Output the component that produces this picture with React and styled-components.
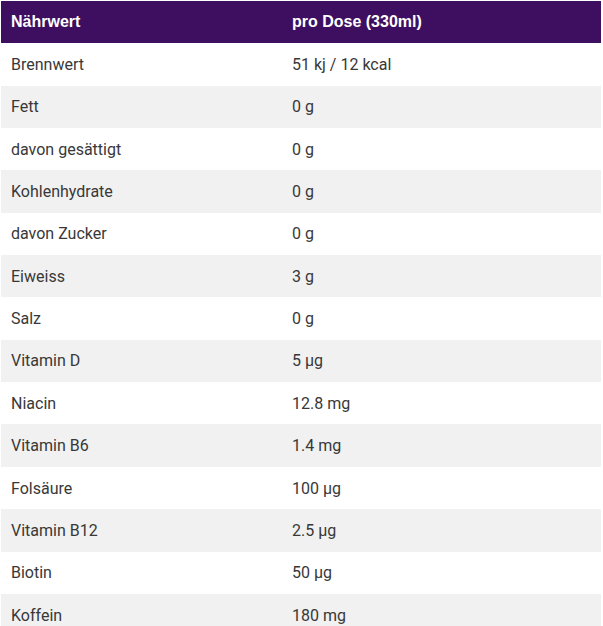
import React from 'react';
import styled, { createGlobalStyle } from 'styled-components';

const GlobalStyle = createGlobalStyle`
  body {
    margin: 0;
    background: #ffffff;
    font-family: Roboto, "Liberation Sans", sans-serif;
  }
`;

const Wrap = styled.div`
  padding: 1px 0 0 1px;
`;

const Table = styled.table`
  width: 600px;
  border-collapse: collapse;
  table-layout: fixed;
`;

const HeadCell = styled.th`
  height: 42.4px;
  padding: 0 10px;
  background: #3e0f60;
  color: #ffffff;
  font-family: "Liberation Sans", Arial, sans-serif;
  font-weight: 700;
  font-size: 16px;
  text-align: left;
  vertical-align: middle;
  width: ${p => p.w || 'auto'};
`;

const Row = styled.tr`
  background: ${p => (p.striped ? '#f1f1f1' : '#ffffff')};
`;

const Cell = styled.td`
  height: 42.35px;
  padding: 0 10px;
  color: #383838;
  font-size: 16px;
  vertical-align: middle;
`;

const rows = [
  ['Brennwert', '51 kj / 12 kcal'],
  ['Fett', '0 g'],
  ['davon gesättigt', '0 g'],
  ['Kohlenhydrate', '0 g'],
  ['davon Zucker', '0 g'],
  ['Eiweiss', '3 g'],
  ['Salz', '0 g'],
  ['Vitamin D', '5 µg'],
  ['Niacin', '12.8 mg'],
  ['Vitamin B6', '1.4 mg'],
  ['Folsäure', '100 µg'],
  ['Vitamin B12', '2.5 µg'],
  ['Biotin', '50 µg'],
  ['Koffein', '180 mg'],
];

export default function App() {
  return (
    <>
      <GlobalStyle />
      <Wrap>
        <Table>
          <thead>
            <tr>
              <HeadCell w="261px">Nährwert</HeadCell>
              <HeadCell>pro Dose (330ml)</HeadCell>
            </tr>
          </thead>
          <tbody>
            {rows.map(([name, value], i) => (
              <Row key={name} striped={i % 2 === 1}>
                <Cell>{name}</Cell>
                <Cell>{value}</Cell>
              </Row>
            ))}
          </tbody>
        </Table>
      </Wrap>
    </>
  );
}
